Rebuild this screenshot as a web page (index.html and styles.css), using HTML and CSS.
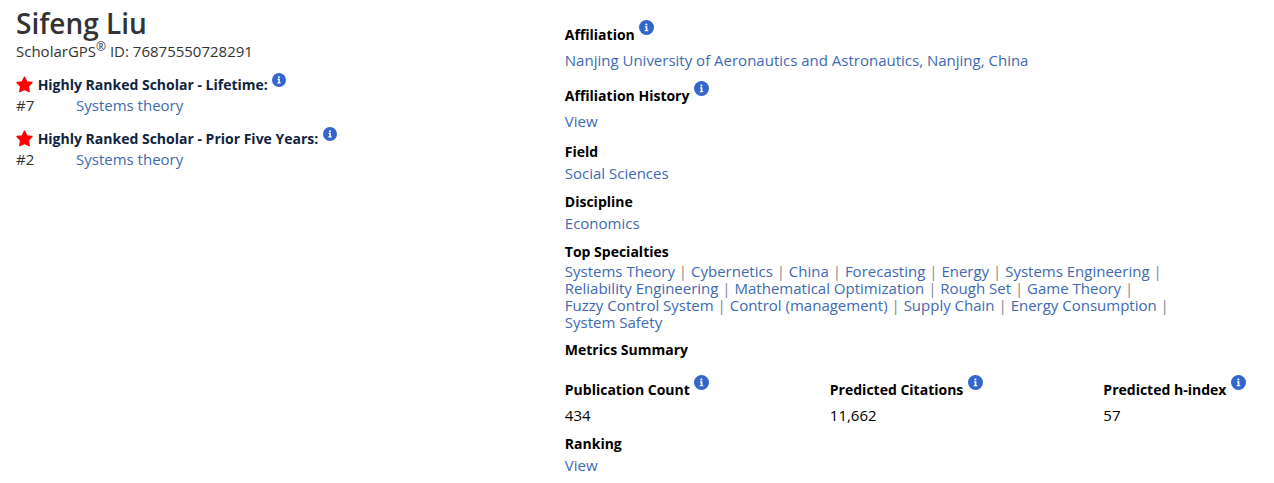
FILE: index.html
```html
<!DOCTYPE html>
<html lang="en">
<head>
    <meta charset="UTF-8">
    <meta name="viewport" content="width=device-width, initial-scale=1.0">
    <title>Sifeng Liu</title>
    <link rel="stylesheet" href="styles.css">
</head>
<body>
    <!-- shared icons -->
    <svg class="sprite" aria-hidden="true">
        <symbol id="info" viewBox="0 0 512 512">
            <circle cx="256" cy="256" r="256" fill="#3366cc"/>
            <circle cx="252" cy="152" r="36" fill="#fff"/>
            <path d="M204 212h82v130h30v44H196v-44h34v-86h-26z" fill="#fff"/>
        </symbol>
        <symbol id="star" viewBox="0 0 18 17">
            <path d="M8.5 1.2l2.2 4.7 5.2.7-3.7 3.8 1 5.2-4.700-2.300-4.700 2.300 1-5.200L1.100 6.600l5.200-.7z" fill="#f00" stroke="#f00" stroke-width="1.5" stroke-linejoin="round"/>
        </symbol>
    </svg>

    <main class="profile">
        <section class="person">
            <h1>Sifeng Liu</h1>
            <p class="scholar-id">ScholarGPS<sup>®</sup> ID: 76875550728291</p>

            <div class="award">
                <h2><svg class="star" aria-hidden="true"><use href="#star"/></svg> Highly Ranked Scholar - Lifetime: <svg class="info" aria-hidden="true"><use href="#info"/></svg></h2>
                <p class="rank"><span>#7</span><a href="#">Systems theory</a></p>
            </div>
            <div class="award">
                <h2><svg class="star" aria-hidden="true"><use href="#star"/></svg> Highly Ranked Scholar - Prior Five Years: <svg class="info" aria-hidden="true"><use href="#info"/></svg></h2>
                <p class="rank"><span>#2</span><a href="#">Systems theory</a></p>
            </div>
        </section>

        <section class="details">
            <div class="field with-info">
                <h3>Affiliation <svg class="info" aria-hidden="true"><use href="#info"/></svg></h3>
                <p><a href="#">Nanjing University of Aeronautics and Astronautics, Nanjing, China</a></p>
            </div>
            <div class="field with-info">
                <h3>Affiliation History <svg class="info" aria-hidden="true"><use href="#info"/></svg></h3>
                <p><a href="#">View</a></p>
            </div>
            <div class="field">
                <h3>Field</h3>
                <p><a href="#">Social Sciences</a></p>
            </div>
            <div class="field">
                <h3>Discipline</h3>
                <p><a href="#">Economics</a></p>
            </div>
            <div class="field">
                <h3>Top Specialties</h3>
                <p class="specialties">
                    <span><a href="#">Systems Theory</a> |</span>
                    <span><a href="#">Cybernetics</a> |</span>
                    <span><a href="#">China</a> |</span>
                    <span><a href="#">Forecasting</a> |</span>
                    <span><a href="#">Energy</a> |</span>
                    <span><a href="#">Systems Engineering</a> |</span>
                    <span><a href="#">Reliability Engineering</a> |</span>
                    <span><a href="#">Mathematical Optimization</a> |</span>
                    <span><a href="#">Rough Set</a> |</span>
                    <span><a href="#">Game Theory</a> |</span>
                    <span><a href="#">Fuzzy Control System</a> |</span>
                    <span><a href="#">Control (management)</a> |</span>
                    <span><a href="#">Supply Chain</a> |</span>
                    <span><a href="#">Energy Consumption</a> |</span>
                    <span><a href="#">System Safety</a></span>
                </p>
            </div>
            <h3>Metrics Summary</h3>
            <div class="metrics">
                <div class="with-info">
                    <h3>Publication Count <svg class="info" aria-hidden="true"><use href="#info"/></svg></h3>
                    <p>434</p>
                </div>
                <div class="with-info">
                    <h3>Predicted Citations <svg class="info" aria-hidden="true"><use href="#info"/></svg></h3>
                    <p>11,662</p>
                </div>
                <div class="with-info">
                    <h3>Predicted h-index <svg class="info" aria-hidden="true"><use href="#info"/></svg></h3>
                    <p>57</p>
                </div>
            </div>
            <div class="field">
                <h3>Ranking</h3>
                <p><a href="#">View</a></p>
            </div>
        </section>
    </main>
</body>
</html>
```
FILE: styles.css
```css
body {
    margin: 0;
    background-color: #fff;
    color: #000;
    font-family: "Open Sans", sans-serif;
    font-size: 15px;
    line-height: 20px;
}
h1, h2, h3, p {
    margin: 0;
}
h2, h3 {
    font-size: 14px;
    font-weight: bold;
}
a {
    color: #4169b2;
    text-decoration: none;
}
a:hover {
    text-decoration: underline;
}
.sprite {
    display: none;
}
.profile {
    display: flex;
}

/* left column */
.person {
    flex: 0 0 43%;
    padding-top: 8px;
    margin: 0 1px 0 16px;
    color: #333;
}
.person h1 {
    margin-bottom: 3px;
    font-size: 28px;
    font-weight: 600;
    line-height: 30px;
}
.scholar-id sup {
    font-size: 12px;
    line-height: 0;
}
.award {
    margin-top: 12px;
}
.award h2 {
    color: #0f2440;
}
.star {
    width: 18px;
    height: 17px;
    vertical-align: -3px;
}
.info {
    width: 15px;
    height: 15px;
    margin-left: 1px;
    vertical-align: 5px;
}
.award .info {
    width: 14px;
    height: 14px;
    vertical-align: 3px;
}
.rank {
    display: flex;
}
.rank span {
    width: 60px;
}

/* right column */
.details {
    flex: 1;
    padding: 20px 28px 8px 0;
}
.field {
    margin-bottom: 9px;
}
.field p {
    margin-top: 1px;
}
.field.with-info {
    margin-bottom: 11px;
}
.with-info p {
    margin-top: 5px;
}
.field .specialties {
    color: #888;
    line-height: 17px;
}
.specialties span {
    white-space: nowrap;
}
.metrics {
    display: flex;
    justify-content: space-between;
    margin: 15px 0 9px;
}
```
